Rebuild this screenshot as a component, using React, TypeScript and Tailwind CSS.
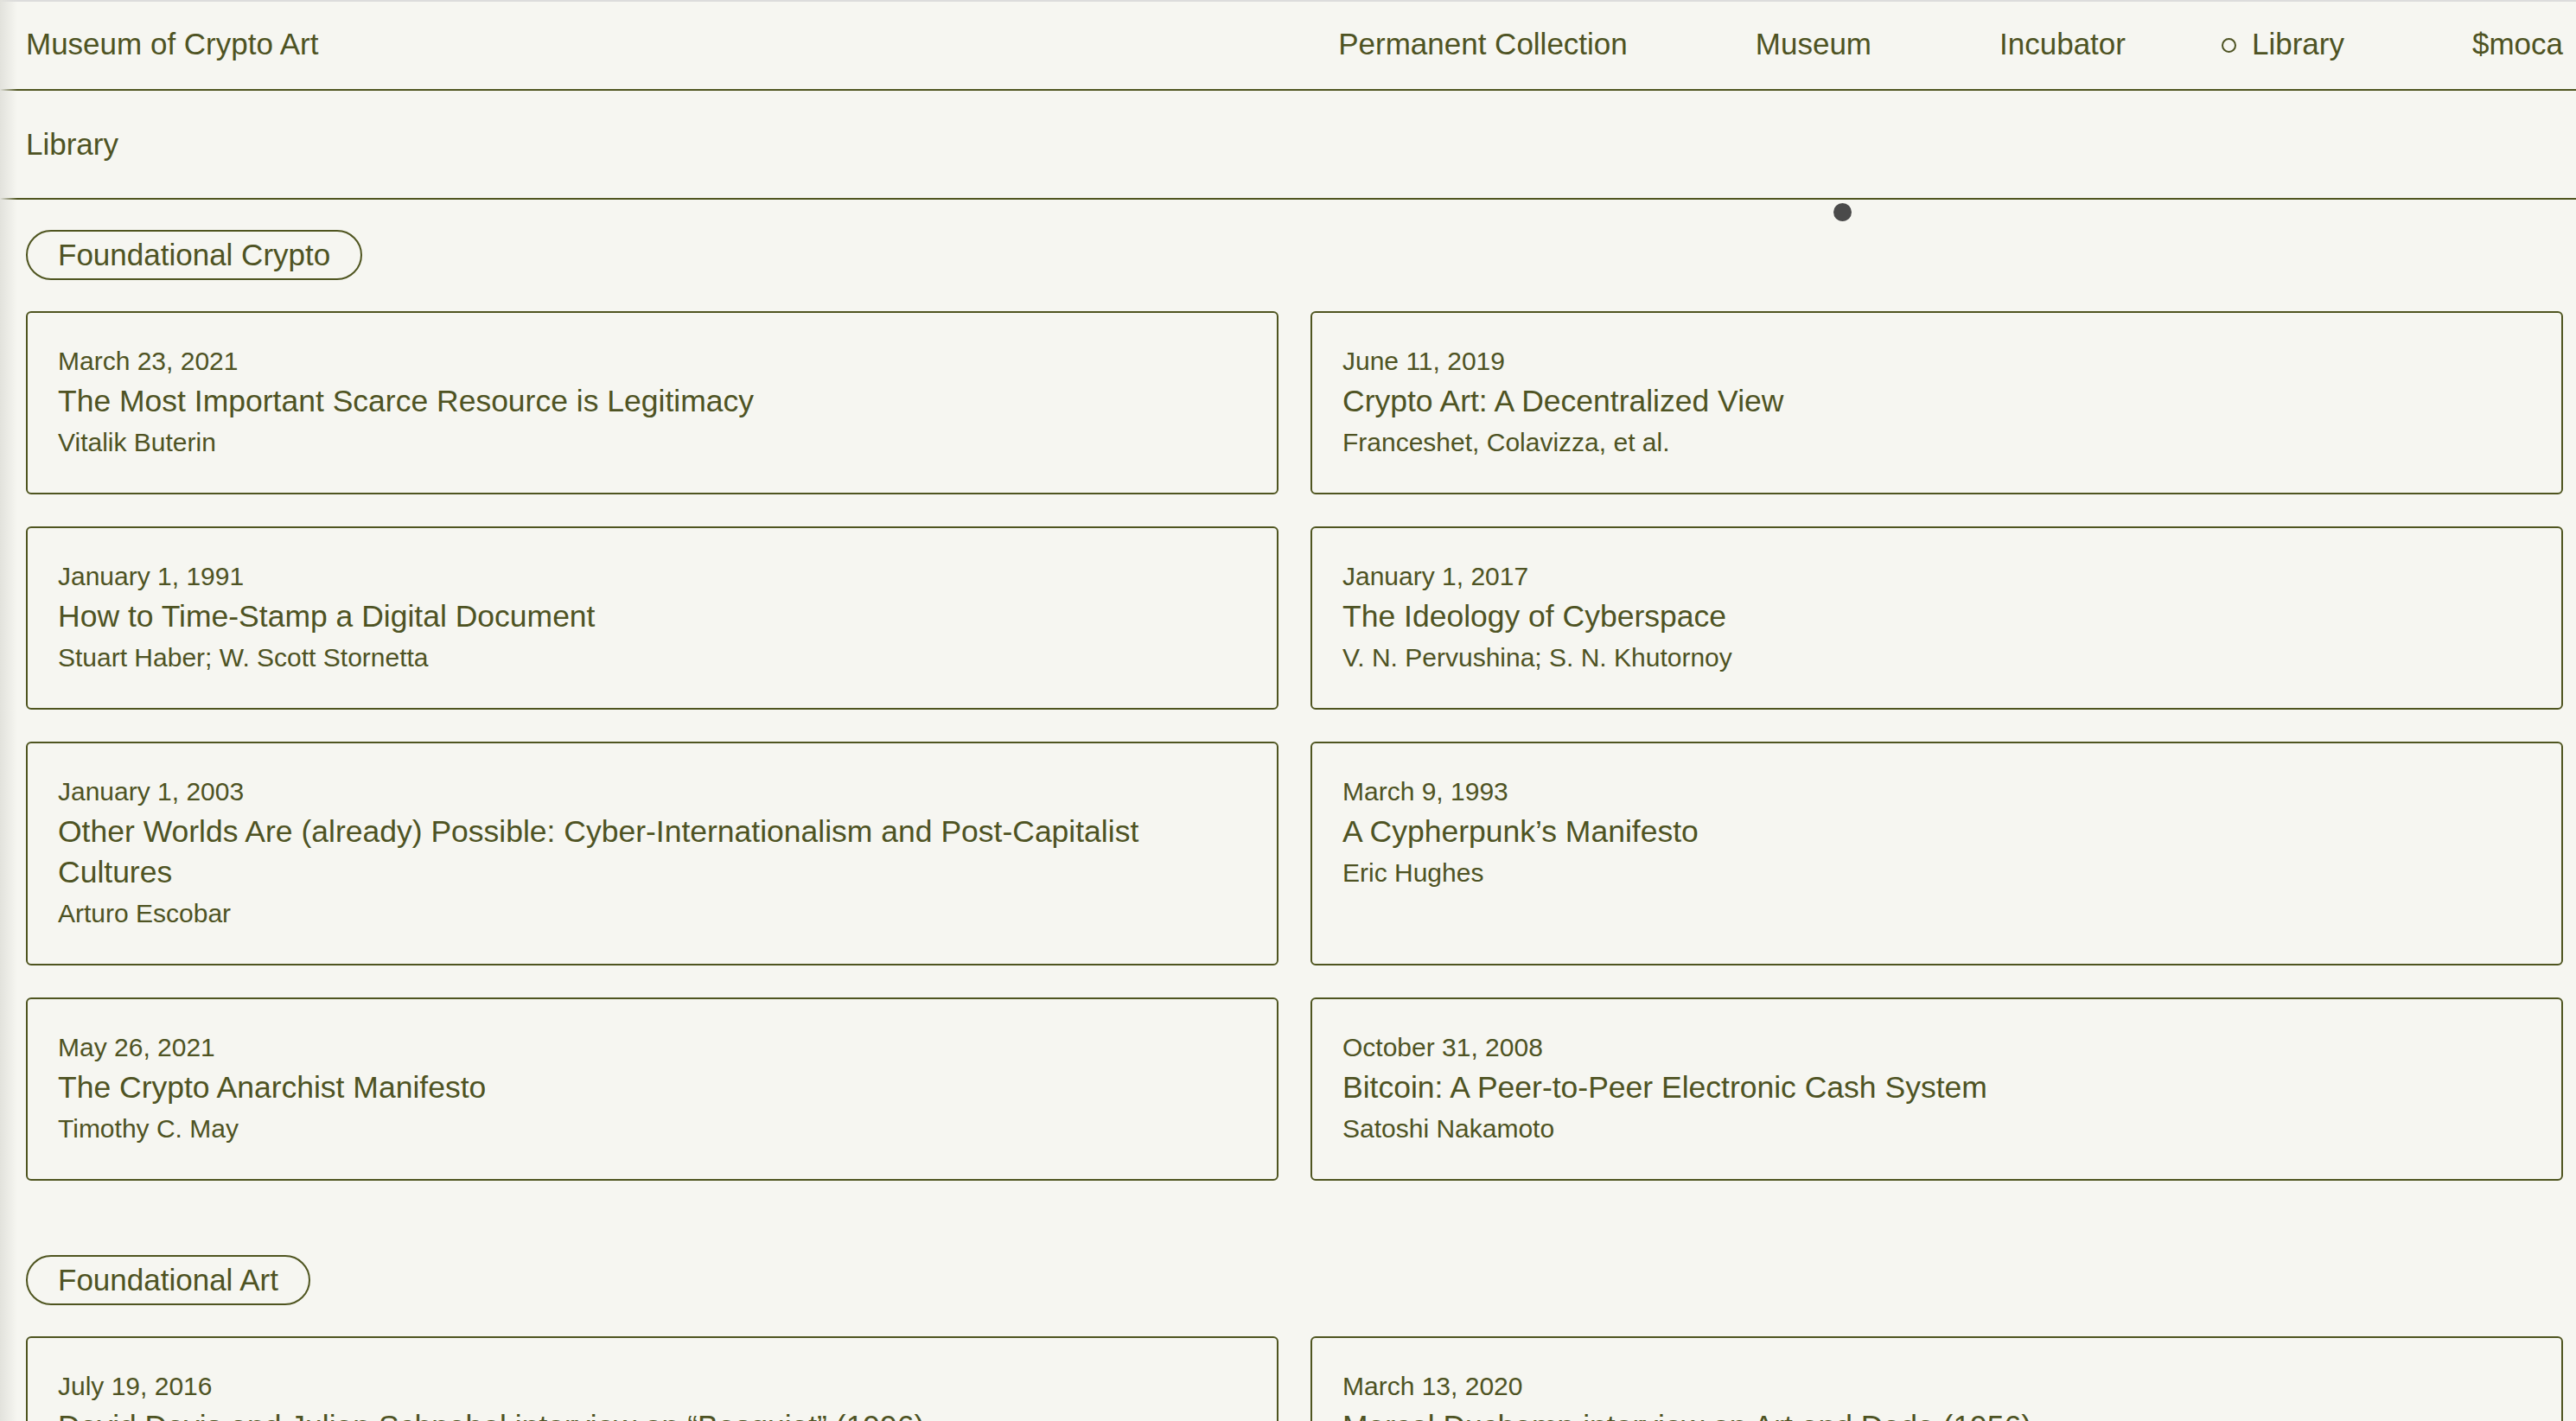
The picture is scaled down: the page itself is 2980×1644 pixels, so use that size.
import React from "react";

type Entry = { date: string; title: string; author: string };

const crypto: Entry[] = [
  { date: "March 23, 2021", title: "The Most Important Scarce Resource is Legitimacy", author: "Vitalik Buterin" },
  { date: "June 11, 2019", title: "Crypto Art: A Decentralized View", author: "Franceshet, Colavizza, et al." },
  { date: "January 1, 1991", title: "How to Time-Stamp a Digital Document", author: "Stuart Haber; W. Scott Stornetta" },
  { date: "January 1, 2017", title: "The Ideology of Cyberspace", author: "V. N. Pervushina; S. N. Khutornoy" },
  {
    date: "January 1, 2003",
    title: "Other Worlds Are (already) Possible: Cyber-Internationalism and Post-Capitalist Cultures",
    author: "Arturo Escobar",
  },
  { date: "March 9, 1993", title: "A Cypherpunk’s Manifesto", author: "Eric Hughes" },
  { date: "May 26, 2021", title: "The Crypto Anarchist Manifesto", author: "Timothy C. May" },
  { date: "October 31, 2008", title: "Bitcoin: A Peer-to-Peer Electronic Cash System", author: "Satoshi Nakamoto" },
];

const art: Entry[] = [
  { date: "July 19, 2016", title: "David Davis and Julian Schnabel interview on “Basquiat” (1996)", author: "Charlie Rose" },
  { date: "March 13, 2020", title: "Marcel Duchamp interview on Art and Dada (1956)", author: "James Johnson Sweeney" },
];

const navItems = ["Permanent Collection", "Museum", "Incubator"];

export default function App() {
  return (
    <div
      className="relative min-h-screen bg-[#f6f6f1] text-[#4e5323]"
      style={{ fontFamily: '"Liberation Sans", Arial, sans-serif' }}
    >
      <div className="pointer-events-none absolute left-0 top-0 bottom-0 w-[20px] bg-linear-to-r from-[#e2e2dc] to-[#f6f6f1]/0" />
      <div className="h-[2px] bg-[#dcdcdc]" />

      <header className="flex h-[103px] items-center justify-between border-b-2 border-[#4f5520] pb-[3px] pl-[30px] pr-[15px] text-[35px]">
        <span>Museum of Crypto Art</span>
        <nav className="flex items-center gap-[148px]">
          {navItems.map((item) => (
            <span key={item}>{item}</span>
          ))}
          <span className="-ml-[37px] flex items-center gap-[18px]">
            <span className="mt-[2px] h-[17px] w-[17px] rounded-full border-2 border-[#4e5323]" />
            Library
          </span>
          <span>$moca</span>
        </nav>
      </header>

      <div className="flex h-[126px] items-center border-b-2 border-[#4f5520] pl-[30px] text-[35px]">
        Library
      </div>

      <Section label="Foundational Crypto" entries={crypto} />
      <div className="pt-[51px]">
        <Section label="Foundational Art" entries={art} />
      </div>

      <div className="pointer-events-none absolute left-[2121px] top-[235px] h-[21px] w-[21px] rounded-full bg-[#4a4a4a]" />
    </div>
  );
}

function Section({ label, entries }: { label: string; entries: Entry[] }) {
  return (
    <section className="pl-[30px] pr-[15px] pt-[35px]">
      <div className="inline-flex h-[58px] items-center rounded-full border-2 border-[#4f5520] px-[35px] text-[35px]">
        {label}
      </div>
      <div className="mt-[36px] grid grid-cols-2 gap-[37px]">
        {entries.map((e) => (
          <article key={e.title} className="rounded-md border-2 border-[#4f5520] px-[35px] pt-[36px] pb-[38px]">
            <div className="text-[30px] leading-[40px]">{e.date}</div>
            <h3 className="mt-[3px] pr-[60px] text-[35.5px] leading-[47px]">{e.title}</h3>
            <div className="mt-[4px] text-[30px] leading-[40px]">{e.author}</div>
          </article>
        ))}
      </div>
    </section>
  );
}
